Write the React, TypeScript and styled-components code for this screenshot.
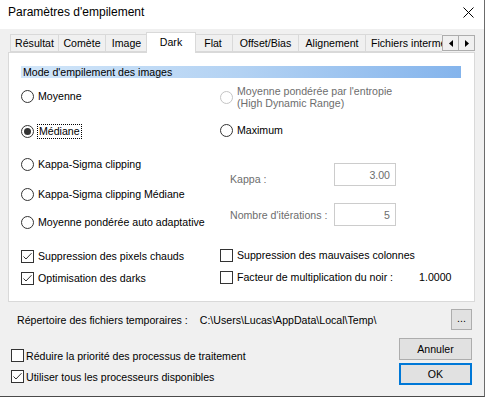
import React from 'react';
import styled, { createGlobalStyle } from 'styled-components';

const Global = createGlobalStyle`
  html, body { margin: 0; padding: 0; background: #ffffff; }
  body {
    font-family: "Liberation Sans", Arial, sans-serif;
    font-size: 10.6px;
    color: #000;
  }
  * { box-sizing: border-box; }
`;

const Window = styled.div`
  width: 485px;
  height: 397px;
  background: #f0f0f0;
  border-right: 1px solid #6b6b6b;
  border-bottom: 1px solid #4a4a4a;
  display: flex;
  flex-direction: column;
`;

const TitleBar = styled.div`
  height: 29px;
  background: #ffffff;
  display: flex;
  align-items: center;
  justify-content: space-between;
  padding: 0 10px 5px 8px;
  font-family: "Liberation Sans", Arial, sans-serif;
  font-size: 12px;
  flex-shrink: 0;
`;

const CloseIcon = () => (
  <svg width="11" height="11" viewBox="0 0 11 11">
    <path d="M0.5 0.5 L10.5 10.5 M10.5 0.5 L0.5 10.5" stroke="#000" strokeWidth="1" />
  </svg>
);

const Body = styled.div`
  flex: 1;
  display: flex;
  flex-direction: column;
  padding: 3px 9px 0 8px;
`;

const TabRow = styled.div`
  display: flex;
  align-items: flex-end;
  height: 21px;
  position: relative;
  z-index: 1;
`;

const TabStrip = styled.div`
  display: flex;
  align-items: flex-end;
  flex: 1;
  overflow: hidden;
  height: 21px;
  padding-left: 2px;
`;

const Tab = styled.div<{ $w: number; $active?: boolean }>`
  flex-shrink: 0;
  width: ${(p) => p.$w}px;
  height: ${(p) => (p.$active ? 21 : 18)}px;
  margin: ${(p) => (p.$active ? '0 -2px 0 -2px' : '0 0 1px -1px')};
  background: ${(p) => (p.$active ? '#ffffff' : '#f0f0f0')};
  border: 1px solid #d9d9d9;
  border-bottom: ${(p) => (p.$active ? 'none' : '1px solid #d9d9d9')};
  display: flex;
  align-items: ${(p) => (p.$active ? 'flex-start' : 'center')};
  padding-top: ${(p) => (p.$active ? '3px' : '0')};
  justify-content: center;
  white-space: nowrap;
  position: relative;
  z-index: ${(p) => (p.$active ? 2 : 1)};
  &:first-child { margin-left: 0; }
`;

const ClipTab = styled(Tab)`
  justify-content: flex-start;
  padding-left: 5px;
`;

const Spinner = styled.div`
  display: flex;
  margin-bottom: 2px;
  flex-shrink: 0;
`;

const SpinBtn = styled.div`
  width: 17px;
  height: 16px;
  border: 1px solid #adadad;
  background: #f0f0f0;
  display: flex;
  align-items: center;
  justify-content: center;
  & + & { border-left: none; width: 16px; }
`;

const Arrow = ({ dir }: { dir: 'l' | 'r' }) => (
  <svg width="4" height="7" viewBox="0 0 4 7">
    {dir === 'l' ? <path d="M4 0 L0 3.5 L4 7 Z" fill="#000" /> : <path d="M0 0 L4 3.5 L0 7 Z" fill="#000" />}
  </svg>
);

const Panel = styled.div`
  height: 250px;
  margin-top: -1px;
  background: #ffffff;
  border: 1px solid #d9d9d9;
  padding: 13px 13px 0 12px;
  display: flex;
  flex-direction: column;
`;

const Header = styled.div`
  height: 12px;
  line-height: 12px;
  padding-left: 2px;
  background: linear-gradient(to right, #d2e6f9 0%, #b3d2f3 50%, #84b4ec 100%);
  white-space: nowrap;
`;

const Columns = styled.div`
  display: grid;
  grid-template-columns: 199px 1fr;
`;

const Col = styled.div`
  display: flex;
  flex-direction: column;
`;

const Row = styled.div<{ $top: number; $dim?: boolean }>`
  display: flex;
  align-items: center;
  gap: 4px;
  margin-top: ${(p) => p.$top}px;
  min-height: 14px;
  white-space: nowrap;
  color: ${(p) => (p.$dim ? '#6d6d6d' : '#000')};
`;

const Focus = styled.span`
  outline: 1px dotted #000;
  outline-offset: 0px;
  padding: 0 1px;
  line-height: 13px;
`;

const TwoLine = styled.div`
  line-height: 12px;
`;

const Radio = ({ on, disabled }: { on?: boolean; disabled?: boolean }) => (
  <svg width="13" height="13" viewBox="0 0 13 13" style={{ flexShrink: 0 }}>
    <circle cx="6.5" cy="6.5" r="6" fill="#fff" stroke={disabled ? '#c4c4c4' : '#333'} strokeWidth="1" />
    {on && <circle cx="6.5" cy="6.5" r="3.5" fill="#333" />}
  </svg>
);

const Check = ({ on }: { on?: boolean }) => (
  <svg width="13" height="13" viewBox="0 0 13 13" style={{ flexShrink: 0 }}>
    <rect x="0.5" y="0.5" width="12" height="12" fill="#fff" stroke="#333" strokeWidth="1" />
    {on && <path d="M2.5 6.5 L5 9 L10.5 3.2" fill="none" stroke="#333" strokeWidth="1" />}
  </svg>
);

const FieldRow = styled.div<{ $top: number }>`
  display: grid;
  grid-template-columns: 104px 62px;
  align-items: center;
  margin-top: ${(p) => p.$top}px;
  padding-left: 10px;
  color: #6d6d6d;
`;

const FieldLabel = styled.span<{ $drop?: number }>`
  padding-top: ${(p) => (p.$drop ? p.$drop * 2 : 0)}px;
`;

const Field = styled.div`
  height: 23px;
  border: 1px solid #cccccc;
  background: #fff;
  display: flex;
  align-items: center;
  justify-content: flex-end;
  padding-right: 5px;
  color: #6d6d6d;
`;

const Value = styled.span`
  margin-left: 22px;
`;

const Footer = styled.div`
  display: flex;
  flex-direction: column;
  padding: 0 3px 0 2px;
`;

const DirRow = styled.div`
  display: flex;
  align-items: center;
  margin-top: 7px;
  height: 21px;
  padding-left: 7px;
  white-space: nowrap;
`;

const Path = styled.span`
  margin-left: 12px;
`;

const SmallBtn = styled.div`
  margin-left: auto;
  width: 21px;
  height: 21px;
  border: 1px solid #adadad;
  background: #e1e1e1;
  display: flex;
  align-items: center;
  justify-content: center;
  padding-bottom: 4px;
`;

const BottomArea = styled.div`
  display: flex;
  justify-content: space-between;
  margin-top: 8px;
`;

const Checks = styled.div`
  display: flex;
  flex-direction: column;
  padding-top: 11px;
  gap: 8px;
`;

const CheckRow = styled.div`
  display: flex;
  align-items: center;
  gap: 2px;
  padding-left: 1px;
  white-space: nowrap;
`;

const Buttons = styled.div`
  display: flex;
  flex-direction: column;
  gap: 3px;
`;

const Button = styled.div<{ $default?: boolean }>`
  width: 73px;
  height: 22px;
  background: #e1e1e1;
  border: ${(p) => (p.$default ? '2px solid #0078d7' : '1px solid #adadad')};
  display: flex;
  align-items: center;
  justify-content: center;
`;

export default function App() {
  return (
    <>
      <Global />
      <Window>
        <TitleBar>
          <span>Paramètres d'empilement</span>
          <CloseIcon />
        </TitleBar>
        <Body>
          <TabRow>
            <TabStrip>
              <Tab $w={49}>Résultat</Tab>
              <Tab $w={48}>Comète</Tab>
              <Tab $w={43}>Image</Tab>
              <Tab $w={50} $active>Dark</Tab>
              <Tab $w={40}>Flat</Tab>
              <Tab $w={67}>Offset/Bias</Tab>
              <Tab $w={68}>Alignement</Tab>
              <ClipTab $w={110}>Fichiers intermédiaires</ClipTab>
            </TabStrip>
            <Spinner>
              <SpinBtn><Arrow dir="l" /></SpinBtn>
              <SpinBtn><Arrow dir="r" /></SpinBtn>
            </Spinner>
          </TabRow>
          <Panel>
            <Header>Mode d'empilement des images</Header>
            <Columns>
              <Col>
                <Row $top={11}><Radio />Moyenne</Row>
                <Row $top={21}><Radio on /><Focus>Médiane</Focus></Row>
                <Row $top={19}><Radio />Kappa-Sigma clipping</Row>
                <Row $top={16}><Radio />Kappa-Sigma clipping Médiane</Row>
                <Row $top={14}><Radio />Moyenne pondérée auto adaptative</Row>
                <Row $top={20}><Check on />Suppression des pixels chauds</Row>
                <Row $top={8}><Check on />Optimisation des darks</Row>
              </Col>
              <Col>
                <Row $top={7} $dim><Radio disabled /><TwoLine>Moyenne pondérée par l'entropie<br />(High Dynamic Range)</TwoLine></Row>
                <Row $top={14}><Radio />Maximum</Row>
                <FieldRow $top={26}><FieldLabel $drop={4}>Kappa :</FieldLabel><Field>3.00</Field></FieldRow>
                <FieldRow $top={17}><span>Nombre d'itérations :</span><Field>5</Field></FieldRow>
                <Row $top={22}><Check />Suppression des mauvaises colonnes</Row>
                <Row $top={8}><Check />Facteur de multiplication du noir :<Value>1.0000</Value></Row>
              </Col>
            </Columns>
          </Panel>
          <Footer>
            <DirRow>
              Répertoire des fichiers temporaires :<Path>C:\Users\Lucas\AppData\Local\Temp\</Path>
              <SmallBtn>...</SmallBtn>
            </DirRow>
            <BottomArea>
              <Checks>
                <CheckRow><Check />Réduire la priorité des processus de traitement</CheckRow>
                <CheckRow><Check on />Utiliser tous les processeurs disponibles</CheckRow>
              </Checks>
              <Buttons>
                <Button>Annuler</Button>
                <Button $default>OK</Button>
              </Buttons>
            </BottomArea>
          </Footer>
        </Body>
      </Window>
    </>
  );
}
